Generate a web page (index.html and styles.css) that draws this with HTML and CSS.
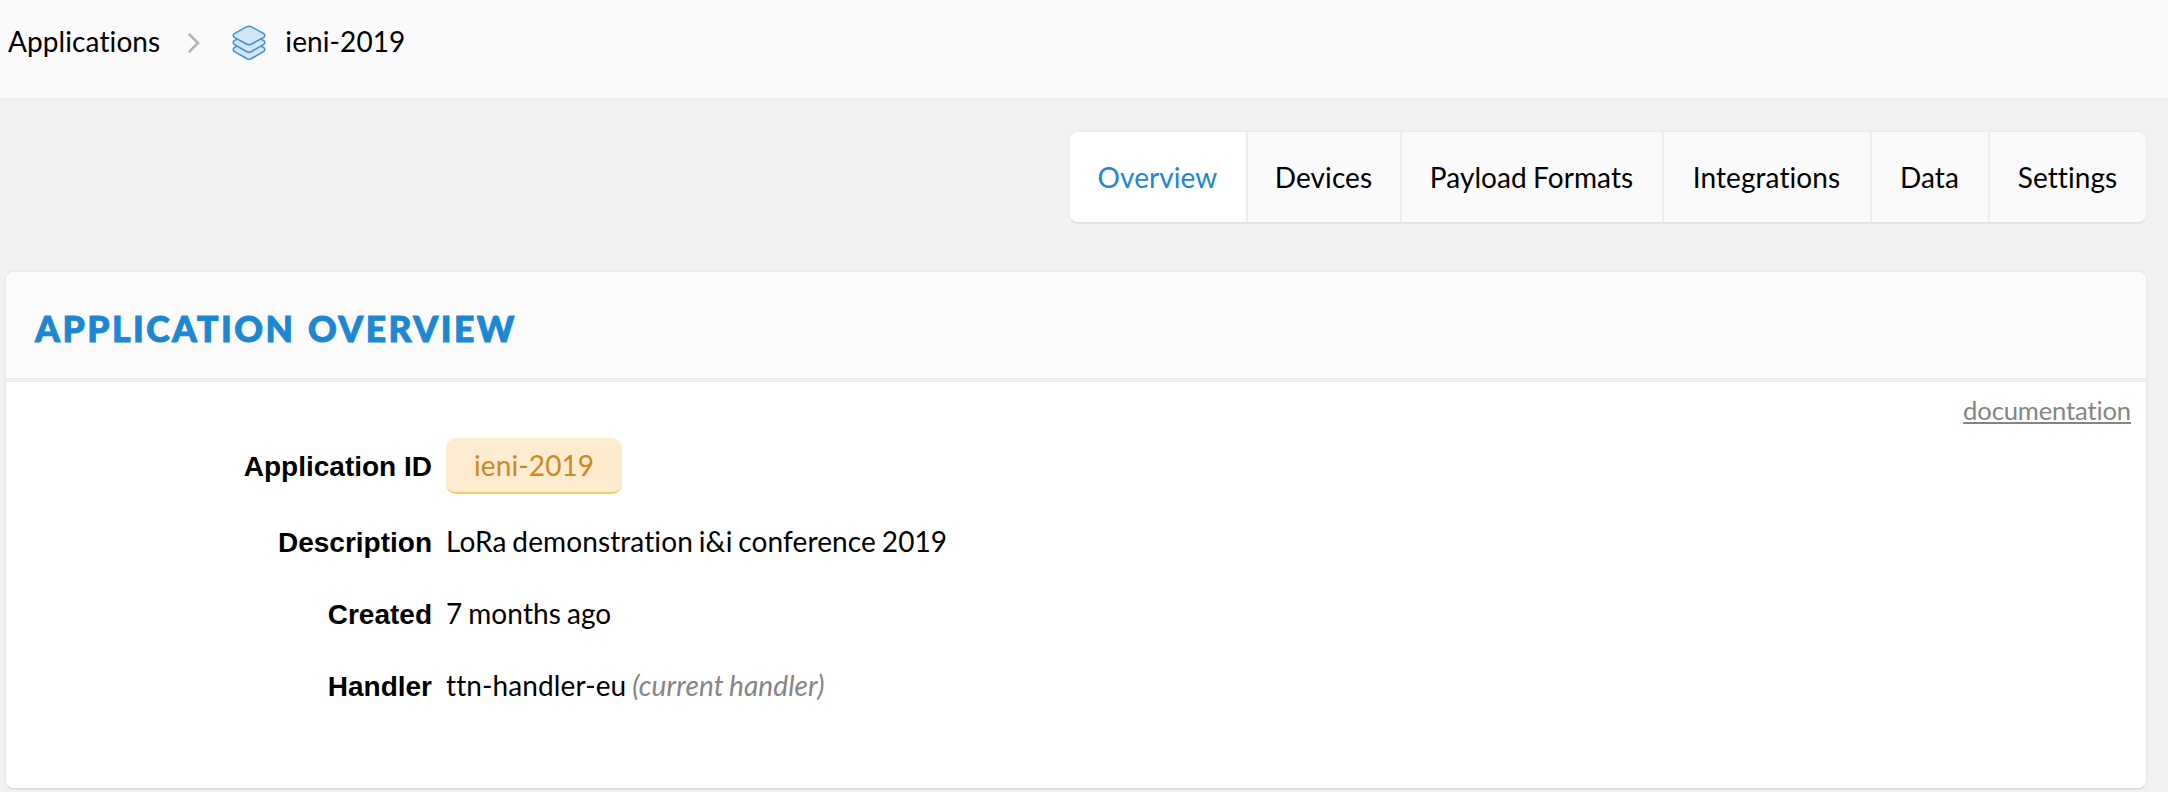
FILE: index.html
```html
<!DOCTYPE html>
<html lang="en">
<head>
<meta charset="utf-8">
<title>ieni-2019</title>
<link rel="stylesheet" href="styles.css">
</head>
<body>
<header class="breadcrumbs">
  <a class="crumb">Applications</a>
  <svg class="chevron" width="12" height="20" viewBox="0 0 12 20"><path d="M1.500 1.500 10 10l-8.500 8.500"/></svg>
  <svg class="layers" width="34" height="36" viewBox="0 0 34 36">
    <path d="M2.200 22.600 14.500 16.500q2.500-1 5 0l12.300 6.100q2 1.900 0 3.800L19.500 33.500q-2.500 1.400-5 0L2.200 26.400q-2-1.900 0-3.800z"/>
    <path d="M2.200 15.600 14.500 9.500q2.500-1 5 0l12.300 6.100q2 1.900 0 3.800L19.500 26.500q-2.500 1.400-5 0L2.200 19.400q-2-1.900 0-3.800z"/>
    <path d="M2.200 8.600 14.500 1.900q2.500-1.400 5 0l12.300 6.700q2 1.900 0 3.800L19.500 19q-2.500 1.400-5 0L2.200 12.400q-2-1.900 0-3.800z"/>
  </svg>
  <a class="crumb">ieni-2019</a>
</header>
<nav class="tabs">
  <a class="tab active">Overview</a>
  <a class="tab">Devices</a>
  <a class="tab">Payload Formats</a>
  <a class="tab">Integrations</a>
  <a class="tab">Data</a>
  <a class="tab">Settings</a>
</nav>
<main class="panel">
  <h1 class="title">Application Overview</h1>
  <div class="content">
    <a class="doc">documentation</a>
    <dl class="details">
      <div class="row first"><dt>Application ID</dt><dd><span class="badge">ieni-2019</span></dd></div>
      <div class="row"><dt>Description</dt><dd>LoRa demonstration i&amp;i conference 2019</dd></div>
      <div class="row"><dt>Created</dt><dd>7 months ago</dd></div>
      <div class="row"><dt>Handler</dt><dd>ttn-handler-eu <em>(current handler)</em></dd></div>
    </dl>
  </div>
</main>
</body>
</html>
```
FILE: styles.css
```css
* { box-sizing: border-box; }
body {
  margin: 0;
  height: 792px;
  overflow: hidden;
  background: #f1f1f1;
  color: #000;
  font-family: Lato, sans-serif;
  font-size: 28px;
  font-variant-ligatures: none;
}
.breadcrumbs {
  display: flex;
  align-items: center;
  height: 102px;
  padding: 0 8px 16px;
  background: #fafafa;
  border-bottom: 4px solid #ededed;
}
.crumb { letter-spacing: 0.100px; }
.chevron { margin: 3px 32px 0 28px; fill: none; stroke: #b5b5b5; stroke-width: 2.500; stroke-linecap: round; }
.layers { margin: 4px 19px 0 0; fill: #d4e5f5; stroke: #3b93d3; stroke-width: 1.500; }
.tabs {
  display: grid;
  grid-template-columns: 178px 154px 262px 208px 118px 156px;
  width: max-content;
  height: 94px;
  margin: 28px 20px 0 auto;
  border: 2px solid #ededed;
  border-bottom-color: #e2e2e2;
  border-radius: 10px;
  overflow: hidden;
  background: #fafafa;
}
.tab { padding-right: 1px; text-align: center; line-height: 90px; letter-spacing: 0.080px; word-spacing: -1px; border-right: 2px solid #ededed; }
.tab:last-child { border-right: 0; }
.tab.active { background: #fff; color: #1c87d2; }
.panel {
  height: 520px;
  margin: 46px 20px 0 4px;
  border: 2px solid #ebebeb;
  border-bottom-color: #dedede;
  border-radius: 10px;
  background: #fff;
  overflow: hidden;
}
.title {
  height: 110px;
  margin: 0;
  padding: 2px 0 0 29px;
  border-bottom: 4px solid #ededed;
  background: #fbfbfb;
  color: #1c87d2;
  font-size: 35.500px;
  font-weight: 900;
  line-height: 110px;
  letter-spacing: 2.500px;
  word-spacing: 1.500px;
  -webkit-text-stroke: 1px #1c87d2;
  text-transform: uppercase;
}
.content { display: flex; flex-direction: column; }
.doc {
  align-self: flex-end;
  margin: 13px 15px 0 0;
  height: 43px;
  line-height: 31px;
  font-size: 25.600px;
  letter-spacing: -0.150px;
  color: #858585;
  text-decoration: underline;
  text-decoration-thickness: 2px;
  text-underline-offset: 2px;
}
.details { margin: 0; }
.row { display: grid; grid-template-columns: 426px 1fr; column-gap: 14px; align-items: baseline; height: 72px; line-height: 72px; }
.row.first { height: 67px; line-height: 54px; }
dt { text-align: right; font-family: "Liberation Sans", Arial, sans-serif; font-weight: 700; }
dd { margin: 0; letter-spacing: 0.110px; word-spacing: -1.400px; }
.badge { display: inline-block; padding: 0 28px; border-bottom: 2px solid #ffc866; border-radius: 10px; background: #ffeccf; color: #cc8822; }
em { color: #858585; }
```
